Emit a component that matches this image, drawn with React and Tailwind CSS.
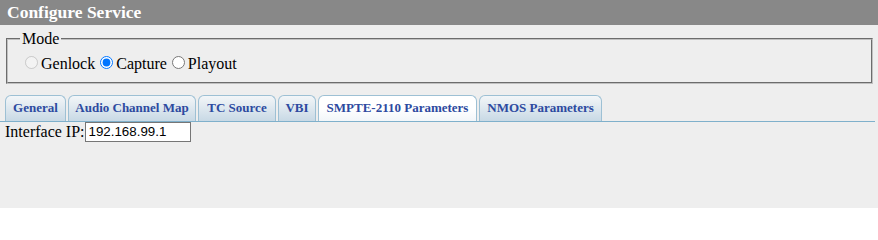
const tabs = [
  { label: "General", w: "w-[61px]" },
  { label: "Audio Channel Map", w: "w-[128px]" },
  { label: "TC Source", w: "w-[78px]" },
  { label: "VBI", w: "w-[38px]" },
  { label: "SMPTE-2110 Parameters", w: "w-[159px]", active: true },
  { label: "NMOS Parameters", w: "w-[123px]" },
];

const serif = "font-['Liberation_Serif','Times_New_Roman',serif]";

export default function App() {
  return (
    <div className={`h-[208px] w-[878px] bg-[#eeeeee] leading-[normal] text-black ${serif}`}>
      <div className="flex h-[25px] items-center bg-[#888888] pl-[7px] text-[17.5px] font-bold leading-none text-white">
        Configure Service
      </div>

      <fieldset className="ml-[6px] mr-[5px] mt-[5px] border-2 border-[#c0c0c0] px-[12px] pb-[9px] pt-[4.6px] text-[16px] [border-style:groove]">
        <legend className="px-[2px]">Mode</legend>
        <div>
          <input type="radio" name="mode" disabled className="m-[3px_3px_0_5px]" />
          <label>Genlock</label>
          <input type="radio" name="mode" defaultChecked className="m-[3px_3px_0_5px]" />
          <label>Capture</label>
          <input type="radio" name="mode" className="m-[3px_3px_0_5px]" />
          <label>Playout</label>
        </div>
      </fieldset>

      <ul className="mt-[11px] flex w-[875px] gap-[2px] border-b border-[#7fb0cb] pl-[5px]">
        {tabs.map((t) => (
          <li
            key={t.label}
            className={`flex h-[26px] ${t.w} items-center justify-center rounded-t-[6px] border border-b-0 border-[#9dc0d4] pb-[1px] text-[13px] font-bold whitespace-nowrap text-[#2d4aa0] ${
              t.active
                ? "bg-gradient-to-b from-white via-white to-[#f2f6f9]"
                : "bg-gradient-to-b from-[#f3f6f8] to-[#c8d9e5]"
            }`}
          >
            {t.label}
          </li>
        ))}
      </ul>

      <div className="pl-[5px] text-[16px]">
        Interface IP:
        <input
          type="text"
          defaultValue="192.168.99.1"
          className="h-[20px] w-[106px] border border-[#767676] bg-white px-[3px] align-baseline font-['Liberation_Sans',Arial,sans-serif] text-[13.33px] text-black outline-none"
        />
      </div>
    </div>
  );
}
